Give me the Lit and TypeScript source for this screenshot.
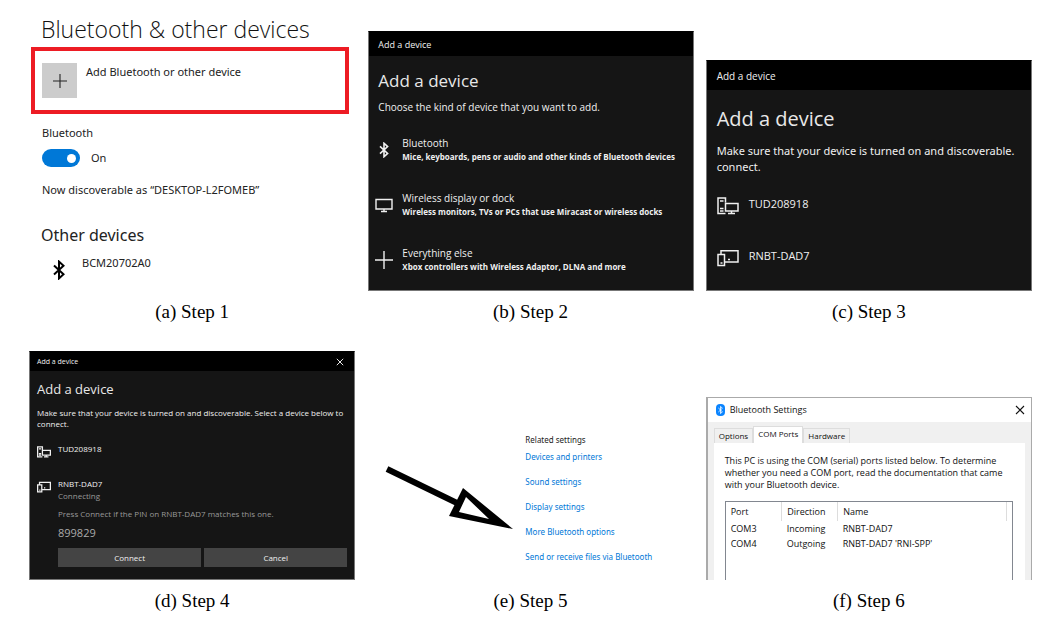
import { LitElement, html, css } from "lit";
import { customElement, state } from "lit/decorators.js";

const bluetoothIcon = html`<svg class="rune" viewBox="0 0 12 20" aria-hidden="true">
  <path d="M1 5.5 L10.5 14.3 L6 18.4 V1.6 L10.5 5.7 L1 14.5" />
</svg>`;

const monitorIcon = html`<svg class="line-icon" viewBox="0 0 18 18" aria-hidden="true">
  <path d="M1 3.5 H17 V13 H1 Z M9 13 V15.5 M6 15.5 H12" />
</svg>`;

const plusIcon = html`<svg class="line-icon" viewBox="0 0 18 18" aria-hidden="true">
  <path d="M9 0 V18 M0 9 H18" />
</svg>`;

const desktopIcon = html`<svg class="device-icon" viewBox="0 0 22 18" aria-hidden="true">
  <path d="M8.5 16.5 H1 V1 H8.5 V5.5 M3 4 H6.5 M3 11.5 H6.5 M3 14 H6.5 M8.5 6.5 H21 V14 H8.5 Z M14.5 14 V16.5 M11 16.5 H18" />
</svg>`;

const tabletIcon = html`<svg class="device-icon" viewBox="0 0 22 18" aria-hidden="true">
  <path d="M4 5 V1.8 H21 V13 H8 M1 5.5 H7.5 V16.5 H1 Z M3.5 14 H5.5 M11 10.5 H13" />
</svg>`;

const closeIcon = html`<svg class="close-icon" viewBox="0 0 10 10" aria-hidden="true">
  <path d="M1 1 L9 9 M9 1 L1 9" />
</svg>`;

const kinds = [
  { icon: bluetoothIcon, name: "Bluetooth", note: "Mice, keyboards, pens or audio and other kinds of Bluetooth devices" },
  { icon: monitorIcon, name: "Wireless display or dock", note: "Wireless monitors, TVs or PCs that use Miracast or wireless docks" },
  { icon: plusIcon, name: "Everything else", note: "Xbox controllers with Wireless Adaptor, DLNA and more" },
];

const links = [
  "Devices and printers",
  "Sound settings",
  "Display settings",
  "More Bluetooth options",
  "Send or receive files via Bluetooth",
];

const ports = [
  ["COM3", "Incoming", "RNBT-DAD7"],
  ["COM4", "Outgoing", "RNBT-DAD7 'RNI-SPP'"],
];

@customElement("app-root")
export class AppRoot extends LitElement {
  @state() private bluetoothOn = true;
  @state() private tab = "COM Ports";

  static styles = css`
    :host {
      display: block;
      background: #fff;
      color: #222;
      font-family: "Open Sans", "Noto Sans", sans-serif;
    }
    * { box-sizing: border-box; }
    h2, h3, p, ul, figure { margin: 0; padding: 0; font-weight: 400; }
    ul { list-style: none; }
    button {
      font: inherit;
      color: inherit;
      background: none;
      border: 0;
      padding: 0;
      text-align: left;
    }
    svg { display: block; fill: none; stroke: currentColor; flex: none; }

    .page {
      display: grid;
      grid-template-columns: repeat(3, minmax(0, 1fr));
      column-gap: 12px;
      row-gap: 28px;
      align-items: end;
      padding: 14px 30px 16px 29px;
    }
    figcaption {
      margin-top: 10px;
      font: 19px/22px "Liberation Serif", serif;
      color: #000;
      text-align: center;
    }

    .settings { padding-bottom: 11px; font-family: "Noto Sans", "Open Sans", sans-serif; }
    .settings h2 { font-family: "Open Sans", sans-serif; font-size: 23px; line-height: 30px; padding-left: 12px; font-weight: 350; color: #111; white-space: nowrap; }
    .add {
      display: flex;
      align-items: flex-start;
      gap: 9px;
      width: calc(100% - 8px);
      margin: 3px 6px 0 2px;
      padding: 12px 7px;
      border: 4px solid #ed1c24;
      font-size: 11px;
      line-height: 18px;
    }
    .add-tile { display: grid; place-items: center; width: 35px; height: 35px; background: #ccc; }
    .add-tile svg { width: 14px; height: 14px; }
    .radio { padding: 10px 0 0 13px; font-size: 11px; line-height: 18px; }
    .switch-row { display: flex; align-items: center; gap: 11px; margin-top: 7px; }
    .switch {
      appearance: none;
      display: flex;
      justify-content: flex-start;
      align-items: center;
      width: 38px;
      height: 18px;
      margin: 0;
      padding: 0 4px;
      border-radius: 9px;
      background: #777;
    }
    .switch::before { content: ""; width: 9px; height: 9px; border-radius: 50%; background: #fff; }
    .switch:checked { background: #0078d7; justify-content: flex-end; }
    .discoverable { margin-top: 14px; }
    .settings h3 { margin-top: 24px; padding-left: 12px; font-size: 16px; line-height: 24px; }
    .known { display: flex; align-items: flex-start; gap: 17px; padding: 7px 0 0 24px; font-size: 11px; line-height: 18px; }
    .known .rune { width: 12px; height: 20px; margin-top: 6px; stroke-width: 2; color: #000; }

    .dialog { background: #151515; color: #f0f0f0; border: 1px solid #777; border-top-color: #000; }
    .bar { display: flex; align-items: center; justify-content: space-between; background: #000; }
    .dialog h2 { color: #e8e8e8; white-space: nowrap; }
    .line-icon { width: 18px; height: 18px; stroke-width: 1.4; }
    .device-icon { width: 22px; height: 18px; stroke-width: 1.5; }

    .kinds { margin-left: 1px; }
    .kinds .bar { height: 24px; padding: 0 9px; font-size: 9px; }
    .kinds h2 { padding: 12px 9px 0; font-size: 17px; line-height: 26px; }
    .kinds .lead { padding: 4px 9px 0; font-size: 10px; line-height: 18px; }
    .kinds ul { display: grid; gap: 27px; padding: 20px 6px 16px; }
    .kind { display: flex; align-items: center; gap: 9px; width: 100%; font-size: 10px; line-height: 14px; white-space: nowrap; }
    .kind .slot { display: grid; place-items: center; width: 18px; }
    .kind .rune { width: 10px; height: 16px; stroke-width: 2; }
    .kind strong { display: block; font-size: 8px; font-weight: 700; }

    .found .bar { height: 29px; padding: 0 10px; font-size: 10px; }
    .found h2 { padding: 15px 10px 0; font-size: 20px; line-height: 28px; }
    .found .lead { padding: 10px 0 0 10px; font-family: "Noto Sans", "Open Sans", sans-serif; font-size: 11px; line-height: 16px; white-space: nowrap; }
    .found ul { display: grid; gap: 31px; padding: 19px 10px 23px; }
    .found .device { display: flex; align-items: flex-start; gap: 10px; font-size: 11px; line-height: 20px; }
    .found .device-icon { margin-top: 3px; }

    .pairing .bar { height: 19px; padding: 0 10px 0 7px; font-size: 7px; }
    .close-icon { width: 8px; height: 8px; stroke-width: 1.2; }
    .pairing h2 { padding: 8px 7px 0; font-size: 13px; line-height: 20px; }
    .pairing .lead { padding: 8px 7px 0; font-size: 8px; line-height: 11px; }
    .pairing ul { display: grid; gap: 20px; padding: 14px 7px 12px; }
    .pairing .device { display: flex; align-items: flex-start; gap: 7px; font-size: 8px; line-height: 12px; }
    .pairing .device-icon { width: 14px; height: 12px; margin-top: 3px; stroke-width: 2; }
    .grow { flex: 1; }
    .dim { color: #999; }
    .pin-note { margin-top: 6px; color: #999; }
    .pin { margin-top: 5px; font-size: 11px; line-height: 16px; color: #aaa; }
    .actions { display: grid; grid-template-columns: 1fr 1fr; gap: 3px; margin-top: 7px; }
    .actions button { height: 19px; background: #444; text-align: center; }

    .related { display: grid; grid-template-columns: 128px 1fr; gap: 12px; padding: 0 0 16px 18px; align-items: start; }
    .arrow { width: 128px; height: 66px; margin-top: 32px; }
    .related-list { font-family: "Noto Sans", "Open Sans", sans-serif; font-size: 8px; line-height: 14px; white-space: nowrap; }
    .related-list h3 { font-size: 8px; }
    .related-list ul { display: grid; gap: 11px; margin-top: 3px; }
    .related-list a { display: block; color: #0078d7; text-decoration: none; }

    .window { display: flex; flex-direction: column; border: 1px solid #aaa; border-width: 1px 1px 0 2px; background: #f0f0f0; color: #111; font-size: 8px; line-height: 12px; }
    .caption { display: flex; align-items: center; gap: 5px; height: 24px; padding: 0 6px 0 8px; background: #fff; font-size: 9px; }
    .badge { width: 9px; height: 12px; }
    .caption .close-icon { width: 10px; height: 10px; stroke-width: 1.1; }
    .tabs { display: flex; align-items: flex-end; padding: 4px 6px 0; }
    .tabs button { height: 15px; padding: 0 4px; border: 1px solid #ddd; border-bottom: 0; }
    .tabs button[aria-selected="true"] { height: 17px; padding-bottom: 3px; background: #fff; }
    .sheet { margin: 0 6px; padding: 12px 12px 0 11px; background: #fff; font-size: 9px; }
    .ports { height: 79px; margin-top: 10px; border: 1px solid #828790; border-bottom: 0; }
    table { width: 100%; border-collapse: collapse; table-layout: fixed; }
    th, td { padding: 0 0 0 5px; text-align: left; font-weight: 400; line-height: 15px; }
    th { border-right: 1px solid #ddd; line-height: 19px; }
    .c-port, .c-direction { width: 56px; }
    .c-end { width: 6px; }
    th:last-child { border: 0; }
  `;

  private stepOne() {
    return html`<figure>
      <section class="settings">
        <h2>Bluetooth &amp; other devices</h2>
        <button class="add"><span class="add-tile">${plusIcon}</span><span>Add Bluetooth or other device</span></button>
        <div class="radio">
          <label for="bt">Bluetooth</label>
          <div class="switch-row">
            <input id="bt" class="switch" type="checkbox" role="switch" .checked=${this.bluetoothOn}
              @change=${(e: Event) => (this.bluetoothOn = (e.target as HTMLInputElement).checked)} />
            <span>${this.bluetoothOn ? "On" : "Off"}</span>
          </div>
          <p class="discoverable">Now discoverable as “DESKTOP-L2FOMEB”</p>
        </div>
        <h3>Other devices</h3>
        <div class="known">${bluetoothIcon}<span>BCM20702A0</span></div>
      </section>
      <figcaption>(a) Step 1</figcaption>
    </figure>`;
  }

  private stepTwo() {
    return html`<figure>
      <section class="dialog kinds">
        <div class="bar">Add a device</div>
        <h2>Add a device</h2>
        <p class="lead">Choose the kind of device that you want to add.</p>
        <ul>
          ${kinds.map((k) => html`<li><button class="kind">
            <span class="slot">${k.icon}</span><span>${k.name}<strong>${k.note}</strong></span>
          </button></li>`)}
        </ul>
      </section>
      <figcaption>(b) Step 2</figcaption>
    </figure>`;
  }

  private stepThree() {
    return html`<figure>
      <section class="dialog found">
        <div class="bar">Add a device</div>
        <h2>Add a device</h2>
        <p class="lead">Make sure that your device is turned on and discoverable.<br />connect.</p>
        <ul>
          <li class="device">${desktopIcon}<span>TUD208918</span></li>
          <li class="device">${tabletIcon}<span>RNBT-DAD7</span></li>
        </ul>
      </section>
      <figcaption>(c) Step 3</figcaption>
    </figure>`;
  }

  private stepFour() {
    return html`<figure>
      <section class="dialog pairing">
        <div class="bar"><span>Add a device</span><button aria-label="Close">${closeIcon}</button></div>
        <h2>Add a device</h2>
        <p class="lead">Make sure that your device is turned on and discoverable. Select a device below to connect.</p>
        <ul>
          <li class="device">${desktopIcon}<span>TUD208918</span></li>
          <li class="device">${tabletIcon}
            <div class="grow">
              <p>RNBT-DAD7</p>
              <p class="dim">Connecting</p>
              <p class="pin-note">Press Connect if the PIN on RNBT-DAD7 matches this one.</p>
              <p class="pin">899829</p>
              <div class="actions"><button>Connect</button><button>Cancel</button></div>
            </div>
          </li>
        </ul>
      </section>
      <figcaption>(d) Step 4</figcaption>
    </figure>`;
  }

  private stepFive() {
    return html`<figure>
      <section class="related">
        <svg class="arrow" viewBox="0 0 128 66" aria-hidden="true">
          <path d="M2 4 L73 38.5" stroke="#000" stroke-width="6" />
          <path d="M78 23 L64 51 L128 64 Z M81 32 L104 54 L74 47 Z" stroke="none" fill="#000" fill-rule="evenodd" />
        </svg>
        <div class="related-list">
          <h3>Related settings</h3>
          <ul>${links.map((l) => html`<li><a href="#">${l}</a></li>`)}</ul>
        </div>
      </section>
      <figcaption>(e) Step 5</figcaption>
    </figure>`;
  }

  private stepSix() {
    return html`<figure>
      <section class="window">
        <div class="caption">
          <svg class="badge" viewBox="0 0 9 12" aria-hidden="true">
            <rect width="9" height="12" rx="4" fill="#0a84ff" stroke="none" />
            <path d="M2.4 4 L6.4 7.8 L4.5 9.6 V2.4 L6.4 4.2 L2.4 8" stroke="#fff" stroke-width="0.8" />
          </svg>
          <span class="grow">Bluetooth Settings</span>
          <button aria-label="Close">${closeIcon}</button>
        </div>
        <div class="tabs" role="tablist">
          ${["Options", "COM Ports", "Hardware"].map((t) => html`<button role="tab"
            aria-selected=${t === this.tab ? "true" : "false"} @click=${() => (this.tab = t)}>${t}</button>`)}
        </div>
        <div class="sheet">
          <p>This PC is using the COM (serial) ports listed below. To determine whether you need a COM port, read the documentation that came with your Bluetooth device.</p>
          <div class="ports">
            <table>
              <thead><tr><th class="c-port">Port</th><th class="c-direction">Direction</th><th>Name</th><th class="c-end"></th></tr></thead>
              <tbody>${ports.map((r) => html`<tr>${r.map((c) => html`<td>${c}</td>`)}<td></td></tr>`)}</tbody>
            </table>
          </div>
        </div>
      </section>
      <figcaption>(f) Step 6</figcaption>
    </figure>`;
  }

  render() {
    return html`<main class="page">
      ${this.stepOne()}${this.stepTwo()}${this.stepThree()}${this.stepFour()}${this.stepFive()}${this.stepSix()}
    </main>`;
  }
}
